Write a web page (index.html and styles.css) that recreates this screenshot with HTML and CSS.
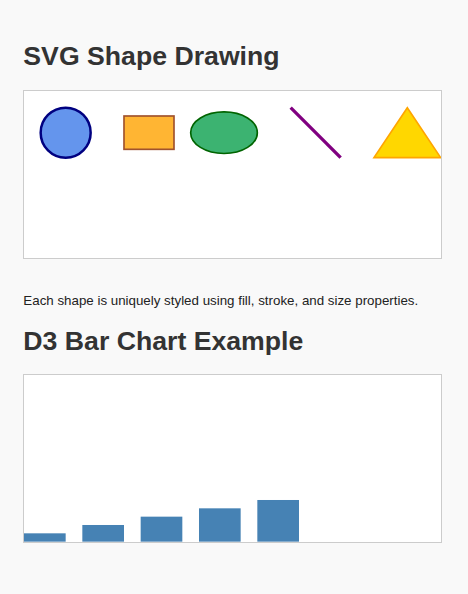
FILE: index.html
```html
<!DOCTYPE html>
<html lang="en">
<head>
<meta charset="utf-8">
<title>SVG Shape Drawing</title>
<link rel="stylesheet" href="styles.css">
</head>
<body>
  <h1 class="title">SVG Shape Drawing</h1>
  <svg class="canvas shapes" viewBox="0 0 500 200" preserveAspectRatio="none">
    <circle cx="50" cy="50" r="30" fill="#6495ED" stroke="#000080" stroke-width="3"/>
    <rect x="120" y="30" width="60" height="40" fill="#FFB533" stroke="#A0522D" stroke-width="2"/>
    <ellipse cx="240" cy="50" rx="40" ry="25" fill="#3CB371" stroke="#006400" stroke-width="2"/>
    <line x1="320" y1="20" x2="380" y2="80" stroke="#800080" stroke-width="4"/>
    <polygon points="460,20 420,80 500,80" fill="#FFD700" stroke="#FFA500" stroke-width="2"/>
  </svg>
  <p class="note">Each shape is uniquely styled using fill, stroke, and size properties.</p>
  <h1 class="title">D3 Bar Chart Example</h1>
  <svg class="canvas chart" viewBox="0 0 500 200" preserveAspectRatio="none">
    <rect x="0" y="190" width="50" height="10" fill="#4682B4"/>
    <rect x="70" y="180" width="50" height="20" fill="#4682B4"/>
    <rect x="140" y="170" width="50" height="30" fill="#4682B4"/>
    <rect x="210" y="160" width="50" height="40" fill="#4682B4"/>
    <rect x="280" y="150" width="50" height="50" fill="#4682B4"/>
  </svg>
</body>
</html>
```
FILE: styles.css
```css
html, body {
  background: #f9f9f9;
}
body {
  margin: 0;
  padding: 23.33px;
  font-family: "Liberation Sans", Arial, sans-serif;
  color: #333;
}
.title {
  font-size: 26.67px;
  font-weight: bold;
  margin: 17.87px 0;
  color: #333;
}
.canvas {
  display: block;
  width: 416.67px;
  height: 166.67px;
  background: #fff;
  border: 1px solid #ccc;
}
.note {
  font-size: 13.33px;
  color: #222;
  margin: 34px 0 13.33px;
}
```
